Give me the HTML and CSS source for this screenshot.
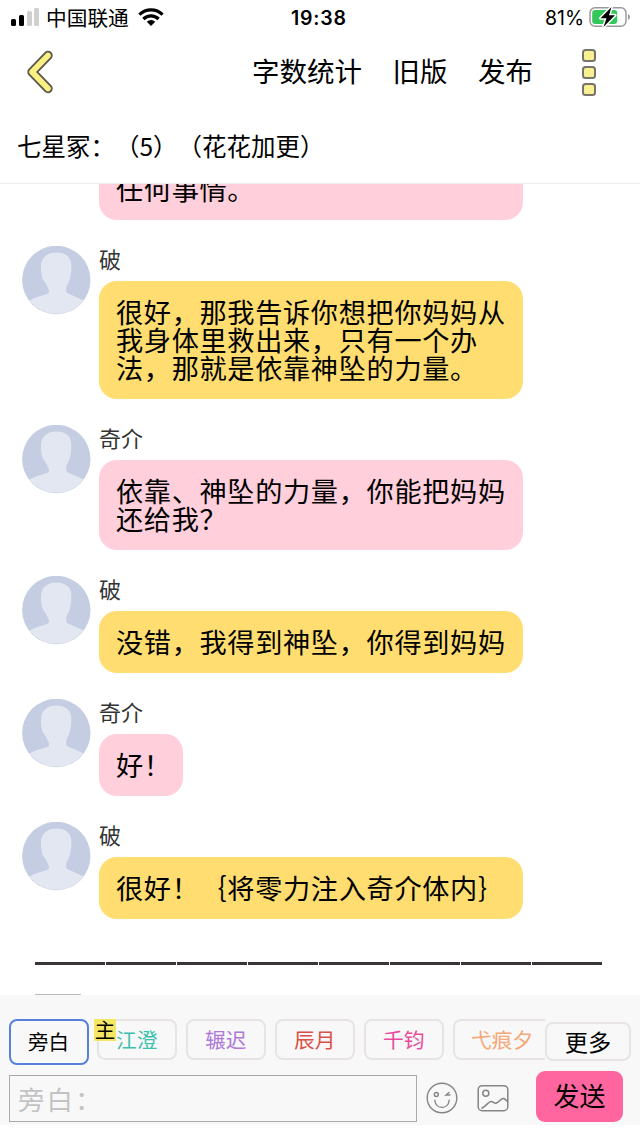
FILE: index.html
```html
<!DOCTYPE html>
<html lang="zh-CN">
<head>
<meta charset="utf-8">
<title>七星冢</title>
<link rel="stylesheet" href="styles.css">
</head>
<body>
<svg class="defs" width="0" height="0">
  <symbol id="avatar" viewBox="0 0 69 69">
    <circle cx="34.300" cy="34" r="34.200" fill="#c4cde1"/>
    <path d="M34.500 6.500C25.500 6.500 19.500 11 19 20c-.2 5 .3 9 1.500 12.500 1 2.500 2.500 3.500 3.500 5.500 1.500 3 2.500 5 3 6.500.3 2-.5 3-2 3.500-5 1.500-11.500 3-17.500 6.500A34.200 34.200 0 0 0 61.300 54.500C56 51.500 50 49.500 45 47c-1-2-1-4.500-.3-7C46.500 37 47.800 34 48.300 30.500 49.300 27 49.500 22 49.200 17.500 48.500 10.500 43 6.500 34.500 6.500Z" fill="#e3e7f2"/>
  </symbol>
</svg>
<div class="app">
  <header class="status">
    <svg class="signal" width="30" height="20" viewBox="0 0 30 20">
      <rect x="1" y="11" width="5" height="7" rx="1.500"/>
      <rect x="9" y="7" width="5" height="11" rx="1.500"/>
      <rect class="weak" x="17" y="3" width="5" height="15" rx="1.500"/>
      <rect class="weak" x="24" y="0" width="5" height="18" rx="1.500"/>
    </svg>
    <span class="carrier">中国联通</span>
    <svg class="wifi" width="26" height="20" viewBox="0 0 26 20">
      <g fill="none" stroke="#000" stroke-width="3.200">
        <path d="M1.400 7.600a16.400 16.400 0 0 1 23.200 0"/>
        <path d="M5.400 12a10.700 10.700 0 0 1 15.200 0"/>
      </g>
      <path d="M13 19 8.800 14.800a6 6 0 0 1 8.400 0Z"/>
    </svg>
    <span class="clock">19:38</span>
    <span class="percent">81%</span>
    <svg class="battery" width="42" height="22" viewBox="0 0 42 22">
      <rect x="1" y="1.700" width="36" height="18.600" rx="5" fill="#fff" stroke="#9a9a9a" stroke-width="1.500"/>
      <rect x="3.200" y="4" width="25" height="14" rx="3" fill="#34c759"/>
      <path d="M39 8v6q2-1 2-3t-2-3Z" fill="#999"/>
      <path d="M22.500 1 11.500 12.300h6l-3 8.700L26 9.300h-6Z" fill="#000" stroke="#fff" stroke-width="3" paint-order="stroke" stroke-linejoin="round"/>
    </svg>
  </header>
  <nav class="nav">
    <svg class="back" width="30" height="44" viewBox="0 0 30 44">
      <path d="M23 5.500 7 22 23 38.500" fill="none" stroke="#5d5a50" stroke-width="9.500" stroke-linecap="round" stroke-linejoin="round"/>
      <path d="M23 5.500 7 22 23 38.500" fill="none" stroke="#fcf083" stroke-width="5.600" stroke-linecap="round" stroke-linejoin="round"/>
    </svg>
    <div class="links"><span>字数统计</span><span>旧版</span><span>发布</span></div>
    <div class="more-menu"><i></i><i></i><i></i></div>
  </nav>
  <h1 class="title">七星冢：（5）（花花加更）</h1>
  <main class="chat">
    <div class="bubble pink tail">任何事情。</div>
    <section class="msg"><svg class="avatar"><use href="#avatar"/></svg><div class="body"><div class="name">破</div><div class="bubble yellow">很好，那我告诉你想把你妈妈从<br>我身体里救出来，只有一个办<br>法，那就是依靠神坠的力量。</div></div></section>
    <section class="msg"><svg class="avatar"><use href="#avatar"/></svg><div class="body"><div class="name">奇介</div><div class="bubble pink">依靠、神坠的力量，你能把妈妈<br>还给我？</div></div></section>
    <section class="msg"><svg class="avatar"><use href="#avatar"/></svg><div class="body"><div class="name">破</div><div class="bubble yellow">没错，我得到神坠，你得到妈妈</div></div></section>
    <section class="msg"><svg class="avatar"><use href="#avatar"/></svg><div class="body"><div class="name">奇介</div><div class="bubble pink short">好！</div></div></section>
    <section class="msg"><svg class="avatar"><use href="#avatar"/></svg><div class="body"><div class="name">破</div><div class="bubble yellow wide">很好！｛将零力注入奇介体内｝</div></div></section>
    <div class="dashes"><i></i><i></i><i></i><i></i><i></i><i></i><i></i><i></i></div>
    <div class="dash-rest"></div>
  </main>
  <footer class="panel">
    <div class="roles">
      <div class="role active">旁白</div>
      <div class="strip">
        <div class="role teal"><b class="badge">主</b>江澄</div>
        <div class="role purple">辗迟</div>
        <div class="role red">辰月</div>
        <div class="role magenta">千钧</div>
        <div class="role orange">弋痕夕</div>
      </div>
      <div class="more">更多</div>
    </div>
    <div class="compose">
      <div class="input">旁白：</div>
      <svg class="smile" width="32" height="32" viewBox="0 0 32 32" fill="none" stroke="#858585" stroke-width="1.400" stroke-linecap="round">
        <circle cx="16" cy="16" r="14.800"/>
        <circle cx="10.300" cy="12.500" r="2"/>
        <path d="M23 10.500l-3 2.500h4M8.800 18.200c.8 9.600 13.600 9.600 14.400 0"/>
      </svg>
      <svg class="photo" width="32" height="28" viewBox="0 0 32 28" fill="none" stroke="#858585" stroke-width="1.500" stroke-linejoin="round">
        <rect x="1.200" y="1.700" width="29.600" height="25" rx="4"/>
        <circle cx="8.800" cy="9.200" r="3"/>
        <path d="M4.500 24.500C10 21.500 11.500 17.500 14 17.500c2.500 0 3 2.500 5.500 1.500 3-1 4.500-5 7-4.500 2 .5 2.500 2 4.300 3"/>
      </svg>
      <div class="send">发送</div>
    </div>
  </footer>
</div>
</body>
</html>
```
FILE: styles.css
```css
* { box-sizing: border-box; }
body {
  margin: 0;
  background: #fff;
  color: #000;
  font-family: "Noto Sans CJK SC", sans-serif;
  text-spacing-trim: space-all;
}
svg { display: block; flex: none; }
.defs { display: none; }
.app {
  width: 640px;
  height: 1139px;
  display: flex;
  flex-direction: column;
  overflow: hidden;
  white-space: nowrap;
}
.status {
  height: 36px;
  flex: none;
  display: flex;
  align-items: center;
  padding-left: 10px;
}
.signal .weak { fill: #d0d0d0; }
.signal { margin-top: -1px; }
.carrier { font-size: 20.700px; line-height: 30px; width: 82px; margin-left: 6px; margin-top: -2px; }
.wifi { margin-left: 10px; margin-top: -2px; }
.clock { font: 600 19.500px/30px Inter, sans-serif; width: 58px; margin-left: 127px; letter-spacing: .8px; }
.percent { font: 400 19.500px/30px Inter, sans-serif; width: 40px; margin-left: 196px; }
.battery { margin-left: 4px; margin-top: -2px; }
.nav {
  height: 72px;
  flex: none;
  display: flex;
  align-items: center;
  padding-left: 25px;
}
.links {
  display: flex;
  gap: 30.500px;
  margin-left: 197px;
  margin-top: -4px;
  width: 330px;
  font-size: 27.500px;
  line-height: 40px;
}
.more-menu { display: flex; flex-direction: column; gap: 4px; }
.more-menu i { width: 14px; height: 13px; border: 2px solid #77746b; border-radius: 3.500px; background: #f9ef93; }
.title {
  margin: 0;
  height: 76px;
  flex: none;
  padding: 0 17px;
  border-bottom: 1px solid #ececec;
  font-size: 24.500px;
  font-weight: 400;
  line-height: 76px;
}
.chat { height: 811px; flex: none; overflow: hidden; display: flex; flex-direction: column; }
.bubble {
  width: fit-content;
  padding: 16px 17px 18px;
  border-radius: 18px;
  font-size: 27.200px;
  letter-spacing: .65px;
  line-height: 28px;
}
.pink { background: #ffcfdb; }
.yellow { background: #ffdd70; }
.bubble.wide { width: 424px; }
.bubble.short { width: 84px; }
.tail { width: 424px; margin: -26px 0 26px 99px; flex: none; }
.msg { display: flex; gap: 8px; padding-left: 22px; margin-bottom: 26px; flex: none; }
.avatar { width: 69px; height: 69px; }
.body { min-height: 69px; }
.name { height: 35px; font-size: 22px; line-height: 25px; color: #333; }
.dashes { display: flex; gap: 1.500px; margin: 17px 0 0 35px; flex: none; }
.dashes i { width: 69.500px; height: 2.500px; background: #3a3638; }
.dash-rest { width: 46px; height: 1px; margin: 29.500px 0 0 35px; background: #bbb; flex: none; }
.panel {
  height: 130px;
  flex: none;
  padding: 24px 9px 0;
  background: #f8f8f8;
}
.roles { display: flex; height: 51px; }
.role {
  position: relative;
  flex: none;
  width: 80px;
  height: 41px;
  padding-left: 17px;
  border: 2px solid #e8e4e5;
  border-radius: 8px;
  font-size: 20.700px;
  line-height: 37px;
}
.role.active { height: 46px; border-color: #5582d8; line-height: 41px; font-size: 20.500px; }
.strip {
  display: flex;
  gap: 9px;
  width: 456px;
  height: 61px;
  margin-top: -10px;
  padding: 10px 0 0 8px;
  overflow: hidden;
}
.role.teal { color: #3dbfae; }
.role.purple { color: #af79d8; }
.role.red { color: #dc5048; }
.role.magenta { color: #e84b9c; }
.role.orange { width: 110px; color: #f5a878; padding-left: 16px; }
.badge {
  position: absolute;
  left: -5px;
  top: -2px;
  width: 22px;
  height: 22px;
  background: #f5e663;
  color: #000;
  font-size: 20.500px;
  font-weight: 400;
  line-height: 21px;
  text-align: center;
}
.more {
  width: 86px;
  height: 39px;
  margin-top: 3px;
  border: 2px solid #e8e4e5;
  border-radius: 8px;
  font-size: 23.200px;
  line-height: 34px;
  text-align: center;
  flex: none;
}
.compose { display: flex; align-items: center; height: 47px; margin-top: 5px; }
.input {
  width: 408px;
  height: 47px;
  padding-left: 8px;
  border: 1px solid #aaa;
  color: #c3c3c5;
  font-size: 26.500px;
  letter-spacing: 2px;
  line-height: 46px;
}
.smile { margin: -2px 0 0 9px; }
.photo { margin: -2px 0 0 19px; }
.send {
  width: 87px;
  height: 51px;
  margin: -4px 0 0 27px;
  border-radius: 9px;
  background: #ff669f;
  font-size: 26px;
  line-height: 48px;
  text-align: center;
}
```
